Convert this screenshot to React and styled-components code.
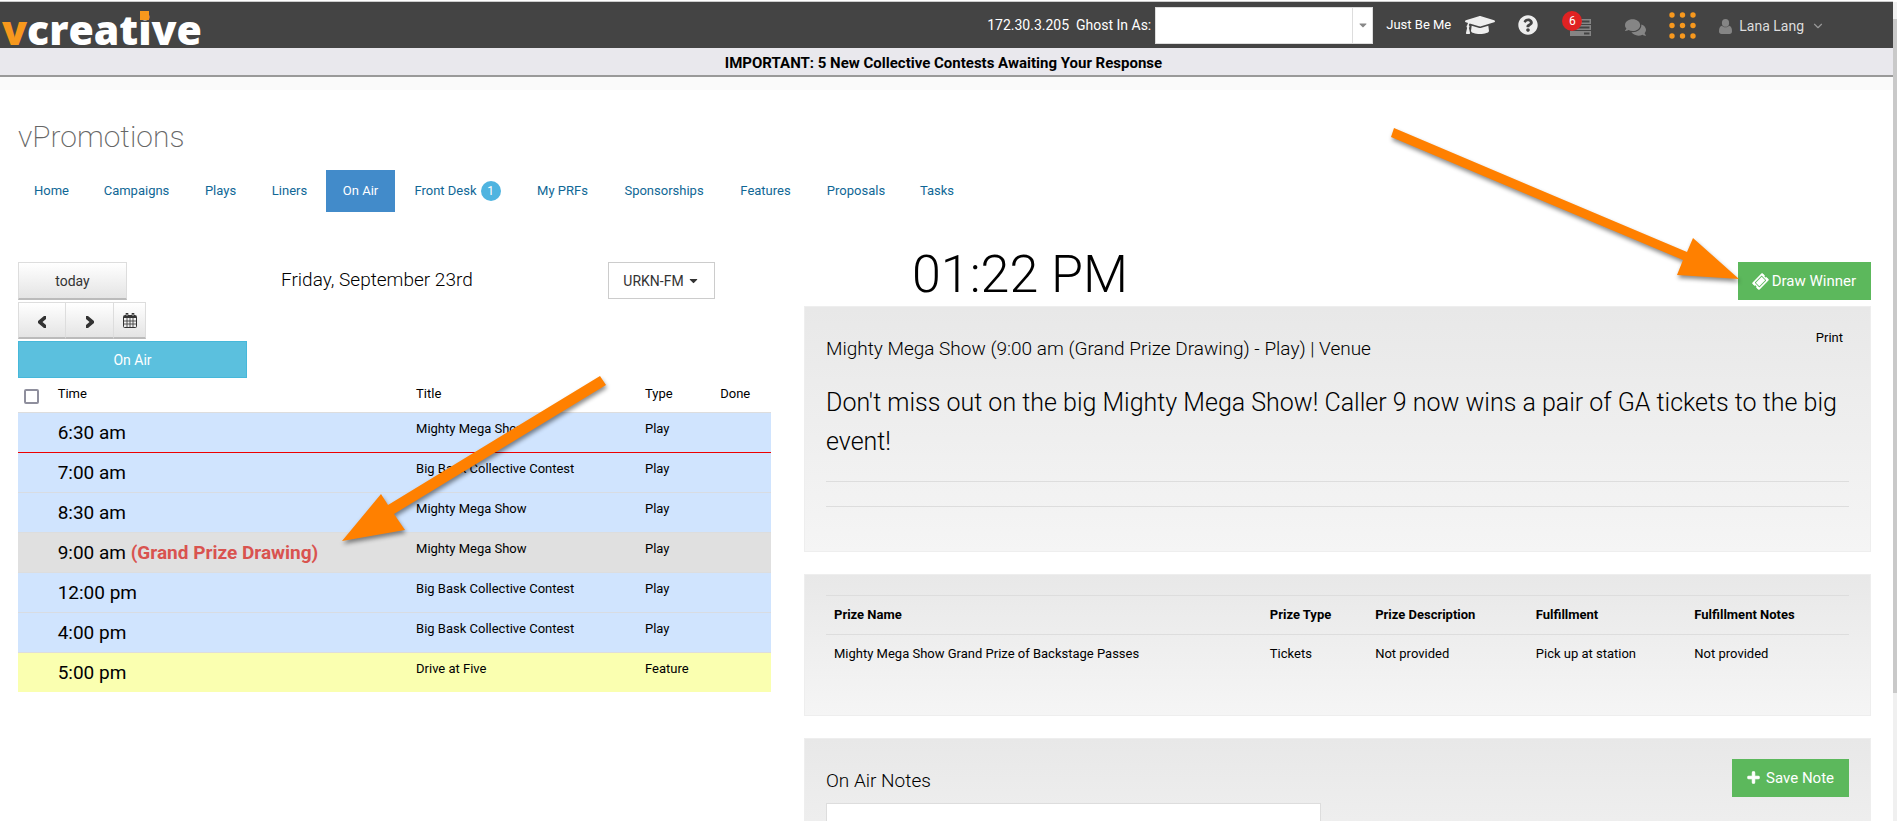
import React from "react";
import styled, { createGlobalStyle } from "styled-components";
import {
  FaCaretDown,
  FaComments,
  FaGraduationCap,
  FaPlus,
  FaQuestionCircle,
  FaTicketAlt,
} from "react-icons/fa";
import { FiChevronDown } from "react-icons/fi";

const tabs = [
  { label: "Home", width: 67 },
  { label: "Campaigns", width: 99 },
  { label: "Plays", width: 65 },
  { label: "Liners", width: 69 },
  { label: "On Air", width: 69, active: true },
  { label: "Front Desk", width: 121, count: 1 },
  { label: "My PRFs", width: 85 },
  { label: "Sponsorships", width: 114 },
  { label: "Features", width: 85 },
  { label: "Proposals", width: 92 },
  { label: "Tasks", width: 66 },
];

const schedule = [
  { time: "6:30 am", title: "Mighty Mega Show", type: "Play", now: true },
  { time: "7:00 am", title: "Big Bask Collective Contest", type: "Play" },
  { time: "8:30 am", title: "Mighty Mega Show", type: "Play" },
  {
    time: "9:00 am",
    note: "(Grand Prize Drawing)",
    title: "Mighty Mega Show",
    type: "Play",
    color: "#e0e0e0",
  },
  { time: "12:00 pm", title: "Big Bask Collective Contest", type: "Play" },
  { time: "4:00 pm", title: "Big Bask Collective Contest", type: "Play" },
  { time: "5:00 pm", title: "Drive at Five", type: "Feature", color: "#faffb0" },
];

const TasksIcon = () => (
  <svg width="21" height="17" viewBox="0 0 21 17" fill="#858585">
    <path
      fillRule="evenodd"
      d="M0 0h21v5H0zM12 1.500h7.500v2H12zM0 6h21v5H0zM7 7.500h12.500v2H7zM0 12h21v5H0zM14 13.500h5.500v2H14z"
    />
  </svg>
);

const DotsIcon = () => (
  <svg width="27" height="27" viewBox="0 0 27 27" fill="#f7981d">
    {[3, 13.5, 24].map((y) =>
      [3, 13.5, 24].map((x) => <circle key={`${x}-${y}`} cx={x} cy={y} r="2.700" />)
    )}
  </svg>
);

const UserIcon = () => (
  <svg width="13" height="15" viewBox="0 0 13 15" fill="#858585">
    <ellipse cx="6.500" cy="3.900" rx="3.600" ry="3.900" />
    <path d="M3 6.800C1 7.200 0 9 0 12.200 0 14 1 15 2.500 15h8c1.500 0 2.500-1 2.500-2.800 0-3.200-1-5-3-5.400-2 2-5 2-7 0z" />
  </svg>
);

const CalendarIcon = () => (
  <svg width="14" height="15" viewBox="0 0 14 15" fill="none" stroke="#333">
    <rect x="0.500" y="2.500" width="13" height="12" rx="1" />
    <path d="M1 3.500h12M1 4.500h12" />
    <path d="M4 5v9M7 5v9M10 5v9M1 8h12M1 11h12" strokeWidth="0.800" />
    <path d="M4 0v4M10 0v4" strokeWidth="2.600" />
    <path d="M4 1v2M10 1v2" stroke="#ddd" strokeWidth="0.800" />
  </svg>
);

const AngleIcon = ({ flip }) => (
  <svg width="8" height="12" viewBox="0 0 8 12" fill="#333">
    <path d={flip ? "M0 0h2l6 5v2l-6 5H0V9l3.500-3L0 3z" : "M8 0H6L0 5v2l6 5h2V9L4.500 6 8 3z"} />
  </svg>
);

const App = () => {
  return (
    <Page>
      <GlobalStyle />
      <TopBar>
        <Logo href="#">
          <span>v</span>creat<DottedI>i</DottedI>ve
        </Logo>
        <Tools>
          <GhostLabel htmlFor="ghost">
            172.30.3.205&nbsp; Ghost In As:
          </GhostLabel>
          <GhostField>
            <select id="ghost" />
            <GhostArrow>
              <FaCaretDown />
            </GhostArrow>
          </GhostField>
          <TextLink href="#">Just Be Me</TextLink>
          <IconButton aria-label="Training" $gap={14}>
            <FaGraduationCap size={30} />
          </IconButton>
          <IconButton aria-label="Help" $gap={23}>
            <FaQuestionCircle size={20} />
          </IconButton>
          <IconButton aria-label="Tasks" $gap={32} $drop>
            <TasksIcon />
            <Alert>6</Alert>
          </IconButton>
          <IconButton aria-label="Messages" $gap={34} $drop>
            <FaComments size={21} color="#858585" />
          </IconButton>
          <IconButton aria-label="Apps" $gap={23}>
            <DotsIcon />
          </IconButton>
          <UserMenu>
            <UserIcon />
            Lana Lang
            <FiChevronDown size={14} color="#999" />
          </UserMenu>
        </Tools>
      </TopBar>
      <Banner>IMPORTANT: 5 New Collective Contests Awaiting Your Response</Banner>
      <Spacer />
      <Main>
        <Heading>vPromotions</Heading>
        <Nav>
          {tabs.map((tab) => (
            <Tab key={tab.label} href="#" $width={tab.width} $active={tab.active}>
              {tab.label}
              {tab.count && <Count>{tab.count}</Count>}
            </Tab>
          ))}
        </Nav>
        <Columns>
          <section>
            <Controls>
              <ButtonStack>
                <TodayButton>today</TodayButton>
                <ButtonGroup>
                  <DayButton aria-label="Previous day" $width={48} $low>
                    <AngleIcon />
                  </DayButton>
                  <DayButton aria-label="Next day" $width={48} $low>
                    <AngleIcon flip />
                  </DayButton>
                  <DayButton aria-label="Pick a date" $width={32}>
                    <CalendarIcon />
                  </DayButton>
                </ButtonGroup>
                <OnAirButton>On Air</OnAirButton>
              </ButtonStack>
              <CurrentDate>Friday, September 23rd</CurrentDate>
              <StationButton>
                URKN-FM <FaCaretDown size={13} />
              </StationButton>
            </Controls>
            <ScheduleArea>
              <Schedule>
                <colgroup>
                  <col style={{ width: "4.200%" }} />
                  <col style={{ width: "47.600%" }} />
                  <col style={{ width: "30.400%" }} />
                  <col style={{ width: "10%" }} />
                  <col />
                </colgroup>
                <thead>
                  <tr>
                    <th>
                      <CheckAll type="checkbox" aria-label="Select all" />
                    </th>
                    <th>Time</th>
                    <th>Title</th>
                    <th>Type</th>
                    <th>Done</th>
                  </tr>
                </thead>
                <tbody>
                  {schedule.map((row) => (
                    <Slot key={row.time} $color={row.color} $now={row.now}>
                      <td />
                      <TimeCell>
                        <Time>
                          {row.time} {row.note && <b>{row.note}</b>}
                        </Time>
                      </TimeCell>
                      <td>{row.title}</td>
                      <td>{row.type}</td>
                      <td />
                    </Slot>
                  ))}
                </tbody>
              </Schedule>
              <RowArrow width="275" height="180" viewBox="0 0 275 180">
                <path d="M260 6L266 15 54 144 65 160 2 171 41 124 48 135z" />
              </RowArrow>
            </ScheduleArea>
          </section>

          <section>
            <ClockRow>
              <Clock>01:22 PM</Clock>
              <DrawArea>
                <GreenButton $gap={4}>
                  <TicketIcon size={15} /> Draw Winner
                </GreenButton>
                <DrawArrow width="352" height="160" viewBox="0 0 352 160">
                  <path d="M8 4L5 13 297 136 291 151 353 155 307 114 301 128z" />
                </DrawArrow>
              </DrawArea>
            </ClockRow>
            <Panel>
              <PanelTop>
                <PanelTitle>
                  Mighty Mega Show (9:00 am (Grand Prize Drawing) - Play) | Venue
                </PanelTitle>
                <PrintLink href="#">Print</PrintLink>
              </PanelTop>
              <Message>
                Don't miss out on the big Mighty Mega Show! Caller 9 now wins a
                pair of GA tickets to the big event!
              </Message>
              <Rule />
              <Rule />
            </Panel>
            <Panel>
              <Prizes>
                <colgroup>
                  <col style={{ width: "42.600%" }} />
                  <col style={{ width: "10.300%" }} />
                  <col style={{ width: "15.700%" }} />
                  <col style={{ width: "15.500%" }} />
                  <col />
                </colgroup>
                <thead>
                  <tr>
                    <th>Prize Name</th>
                    <th>Prize Type</th>
                    <th>Prize Description</th>
                    <th>Fulfillment</th>
                    <th>Fulfillment Notes</th>
                  </tr>
                </thead>
                <tbody>
                  <tr>
                    <td>Mighty Mega Show Grand Prize of Backstage Passes</td>
                    <td>Tickets</td>
                    <td>Not provided</td>
                    <td>Pick up at station</td>
                    <td>Not provided</td>
                  </tr>
                </tbody>
              </Prizes>
            </Panel>
            <Panel>
              <NotesTop>
                <PanelTitle as="label" htmlFor="notes">
                  On Air Notes
                </PanelTitle>
                <GreenButton $gap={6}>
                  <PlusIcon size={13} /> Save Note
                </GreenButton>
              </NotesTop>
              <Notes id="notes" />
            </Panel>
          </section>
        </Columns>
      </Main>
      <ScrollTrack>
        <ScrollThumb />
      </ScrollTrack>
    </Page>
  );
};

const GlobalStyle = createGlobalStyle`
  * {
    box-sizing: border-box;
  }

  body {
    margin: 0;
    background: #fff;
    color: #000;
    font-family: Roboto, "Liberation Sans", sans-serif;
    font-size: 13px;
    line-height: 20px;
  }

  a {
    text-decoration: none;
  }

  button,
  select,
  textarea {
    font-family: inherit;
    border-radius: 0;
  }

  button {
    cursor: pointer;
  }
`;

const Page = styled.div`
  position: relative;
  height: 100vh;
  overflow: hidden;
  padding: 1px 4px 0 0;
`;

const TopBar = styled.header`
  height: 47px;
  display: flex;
  align-items: center;
  justify-content: space-between;
  background: #444;
  border-top: 1px solid #ccc;
  padding: 0 68px 0 2px;
`;

const Logo = styled.a`
  color: #fff;
  font-family: "Open Sans", sans-serif;
  font-size: 41px;
  font-weight: 800;
  line-height: 44px;
  padding-top: 8px;

  span:first-child {
    color: #f7981d;
  }
`;

const DottedI = styled.span`
  position: relative;

  &::after {
    content: "";
    position: absolute;
    top: 10px;
    left: 2px;
    width: 9px;
    height: 9px;
    background: #f7981d;
  }
`;

const Tools = styled.div`
  display: flex;
  align-items: center;
  height: 100%;
`;

const GhostLabel = styled.label`
  color: #fff;
  font-size: 14px;
  margin-right: 4px;
`;

const GhostField = styled.div`
  position: relative;

  select {
    display: block;
    appearance: none;
    width: 218px;
    height: 37px;
    background: #fff;
    border: 1px solid #ddd;
  }
`;

const GhostArrow = styled.span`
  position: absolute;
  top: 1px;
  right: 1px;
  bottom: 1px;
  width: 20px;
  display: flex;
  align-items: center;
  justify-content: center;
  border-left: 1px solid #ddd;
  color: #888;
  font-size: 12px;
  pointer-events: none;
`;

const TextLink = styled.a`
  color: #fff;
  font-size: 13px;
  margin-left: 13px;
`;

const IconButton = styled.button`
  position: relative;
  display: flex;
  padding: ${(p) => (p.$drop ? "4px 0 0" : "0")};
  margin-left: ${(p) => p.$gap}px;
  border: 0;
  background: none;
  color: #eee;
`;

const Alert = styled.span`
  position: absolute;
  top: -4px;
  left: -8px;
  width: 20px;
  height: 20px;
  border-radius: 50%;
  background: #e02222;
  color: #fff;
  font-size: 12px;
  line-height: 20px;
  text-align: center;
`;

const UserMenu = styled.button`
  display: flex;
  align-items: center;
  gap: 7px;
  margin-left: 23px;
  padding: 2px 0 0;
  border: 0;
  background: none;
  color: #ddd;
  font-size: 14px;
`;

const Banner = styled.div`
  height: 29px;
  background: #e9e8ed;
  border-bottom: 2px solid #999;
  padding: 5px 6px 0 0;
  font-size: 15px;
  font-weight: 700;
  text-align: center;
`;

const Spacer = styled.div`
  height: 13px;
  background: #fafafa;
`;

const Main = styled.main`
  padding: 29px 22px 0 18px;
`;

const Heading = styled.h1`
  margin: 0 0 15px;
  color: #666;
  font-size: 30px;
  font-weight: 200;
  line-height: 36px;
`;

const Nav = styled.nav`
  display: flex;
  gap: 2px;
  margin-bottom: 38px;
`;

const Tab = styled.a`
  display: flex;
  align-items: center;
  justify-content: center;
  gap: 4px;
  width: ${(p) => p.$width}px;
  height: 42px;
  white-space: nowrap;
  color: ${(p) => (p.$active ? "#fff" : "#0f6796")};
  background: ${(p) => (p.$active ? "#428bca" : "transparent")};
`;

const Count = styled.span`
  width: 20px;
  border-radius: 50%;
  background: #4fb4e0;
  color: #fff;
  font-size: 12px;
  text-align: center;
`;

const Columns = styled.div`
  display: grid;
  grid-template-columns: 753fr 1067fr;
  column-gap: 33px;
`;

const Controls = styled.div`
  display: grid;
  grid-template-columns: 263fr 327fr 163fr;
  align-items: start;
  padding-top: 12px;
`;

const ButtonStack = styled.div`
  display: flex;
  flex-direction: column;
  align-items: flex-start;
  gap: 2px;
`;

const GrayButton = styled.button`
  height: 37px;
  border: 1px solid #ddd;
  border-bottom: 2px solid #bbb;
  background: linear-gradient(#fff, #e4e4e4);
  color: #333;
  font-size: 14px;
`;

const TodayButton = styled(GrayButton)`
  width: 109px;
  height: 38px;
`;

const ButtonGroup = styled.div`
  display: flex;
`;

const DayButton = styled(GrayButton)`
  display: flex;
  align-items: center;
  justify-content: center;
  width: ${(p) => p.$width}px;
  padding: ${(p) => (p.$low ? "4px 0 0" : "0")};

  & + & {
    border-left: 0;
  }
`;

const OnAirButton = styled.button`
  width: 229px;
  max-width: 90%;
  height: 37px;
  background: #5bc0de;
  border: 1px solid #46b8da;
  color: #fff;
  font-size: 14px;
`;

const CurrentDate = styled.div`
  font-size: 19px;
  font-weight: 300;
  line-height: 36px;
  white-space: nowrap;
`;

const StationButton = styled.button`
  display: flex;
  align-items: center;
  justify-content: center;
  gap: 3px;
  justify-self: start;
  width: 107px;
  height: 37px;
  background: #fff;
  border: 1px solid #ccc;
  color: #333;
  font-size: 14px;
`;

const ScheduleArea = styled.div`
  position: relative;
`;

const Schedule = styled.table`
  width: 100%;
  table-layout: fixed;
  border-collapse: collapse;

  th {
    height: 34px;
    padding: 0 8px 2px;
    font-weight: 400;
    text-align: left;
  }

  th:first-child {
    padding: 4px 6px 0;
  }

  td {
    height: 40px;
    padding: 6px 8px;
    border-top: 1px solid #ddd;
    vertical-align: top;
  }
`;

const CheckAll = styled.input`
  appearance: none;
  display: block;
  width: 15px;
  height: 15px;
  margin: 0;
  border: 2px solid #8f8f9d;
  border-radius: 2px;
  background: #fff;
`;

const Slot = styled.tr`
  background: ${(p) => p.$color || "#d0e4fe"};

  & + & td {
    border-color: #d8dce2;
  }

  && td {
    border-bottom: ${(p) => (p.$now ? "1px solid #e00" : "0")};
  }
`;

const TimeCell = styled.td`
  font-size: 19px;
`;

const Time = styled.div`
  padding-top: 2px;
  line-height: 24px;

  b {
    color: #d9534f;
  }
`;

const Arrow = styled.svg`
  position: absolute;
  fill: #ff8000;
  filter: drop-shadow(1px 3px 2px rgba(0, 0, 0, 0.45));
  overflow: visible;
  pointer-events: none;
`;

const RowArrow = styled(Arrow)`
  top: -8px;
  left: 322px;
`;

const ClockRow = styled.div`
  display: flex;
  justify-content: space-between;
  height: 56px;
  padding-left: 108px;
`;

const Clock = styled.div`
  font-size: 52px;
  font-weight: 300;
  line-height: 50px;
`;

const DrawArea = styled.div`
  position: relative;
  padding-top: 12px;
`;

const DrawArrow = styled(Arrow)`
  top: -126px;
  right: 100%;
`;

const GreenButton = styled.button`
  display: flex;
  align-items: center;
  gap: ${(p) => p.$gap}px;
  height: 38px;
  padding: 0 15px;
  border: 0;
  background: #5cb85c;
  color: #fff;
  font-size: 15px;
`;

const TicketIcon = styled(FaTicketAlt)`
  transform: rotate(-45deg);
`;

const PlusIcon = styled(FaPlus)`
  stroke: #fff;
  stroke-width: 40px;
`;

const Panel = styled.div`
  padding: 20px 21px;
  margin-bottom: 22px;
  border: 1px solid #eee;
  background: linear-gradient(#e8e8e8, #f5f5f5);
`;

const PanelTop = styled.div`
  display: flex;
  justify-content: space-between;
`;

const PanelTitle = styled.h2`
  margin: 0;
  padding-top: 10px;
  font-size: 19px;
  font-weight: 300;
  line-height: 24px;
`;

const PrintLink = styled.a`
  padding: 1px 6px 0 0;
  color: #000;
`;

const Message = styled.p`
  margin: 22px 0 20px;
  font-size: 25px;
  font-weight: 300;
  line-height: 39px;
`;

const Rule = styled.hr`
  margin: 0 0 24px;
  border: 0;
  border-top: 1px solid #ddd;
`;

const Prizes = styled.table`
  width: 100%;
  table-layout: fixed;
  border-collapse: collapse;
  margin-bottom: 21px;

  th,
  td {
    height: 39px;
    padding: 0 8px;
    border-top: 1px solid #ddd;
    text-align: left;
  }
`;

const NotesTop = styled.div`
  display: flex;
  justify-content: space-between;
  height: 44px;
`;

const Notes = styled.textarea`
  display: block;
  width: 100%;
  max-width: 495px;
  height: 90px;
  border: 1px solid #ddd;
  resize: none;
`;

const ScrollTrack = styled.div`
  position: absolute;
  top: 2px;
  right: 0;
  bottom: 0;
  width: 4px;
  padding-top: 17px;
  background: #f0f0f0;
`;

const ScrollThumb = styled.div`
  height: 84%;
  background: #c9c9c9;
`;

export default App;
